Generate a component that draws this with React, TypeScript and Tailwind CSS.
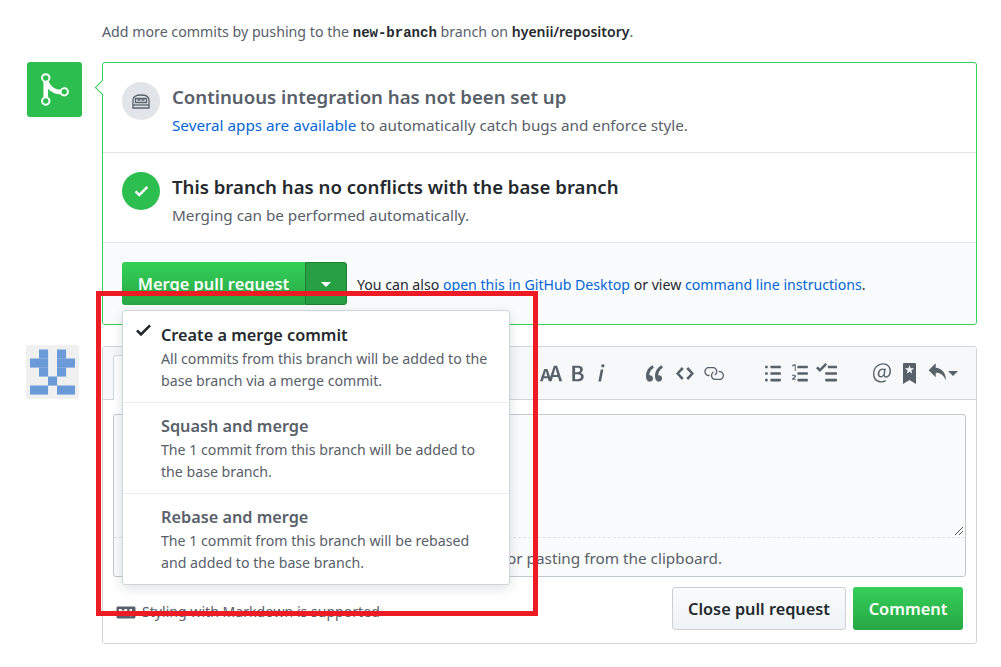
const font = { fontFamily: '"Noto Sans", sans-serif' };

function Octicon({ d, w, h = 16, className }: { d: string; w: number; h?: number; className?: string }) {
  return (
    <svg viewBox={`0 0 ${w} ${h}`} className={className} fill="currentColor">
      <path fillRule="evenodd" d={d} />
    </svg>
  );
}

const merge = "M10 7c-.73 0-1.38.41-1.73 1.02V8C7.22 7.98 6 7.64 5.14 6.98c-.75-.58-1.5-1.61-1.89-2.44A1.993 1.993 0 0 0 2 .99C.89.99 0 1.89 0 3a2 2 0 0 0 1 1.72v6.56c-.59.35-1 .99-1 1.72 0 1.11.89 2 2 2a1.993 1.993 0 0 0 1-3.72V7.67c.67.7 1.44 1.27 2.3 1.69.86.42 2.03.63 2.97.64v-.02c.36.61 1 1.02 1.73 1.02 1.11 0 2-.89 2-2 0-1.11-.89-2-2-2zm-6.8 6c0 .66-.55 1.2-1.2 1.2-.65 0-1.2-.55-1.2-1.2 0-.65.55-1.2 1.2-1.2.65 0 1.2.55 1.2 1.2zM2 4.2C1.34 4.2.8 3.65.8 3c0-.65.55-1.2 1.2-1.2.65 0 1.2.55 1.2 1.2 0 .65-.55 1.2-1.2 1.2zm8 6c-.66 0-1.2-.55-1.2-1.2 0-.65.55-1.2 1.2-1.2.65 0 1.2.55 1.2 1.2 0 .65-.55 1.2-1.2 1.2z";
const check = "M12 5l-8 8-4-4 1.5-1.5L4 10l6.5-6.5L12 5z";
const textSize = "M13.62 9.08L12.1 3.66h-.06l-1.5 5.42h3.08zM5.7 10.13S4.68 6.52 4.53 6.02h-.08l-1.13 4.11H5.7zM17.31 14h-2.25l-.95-3.25h-4.07L9.09 14H6.84l-.69-2.33H2.87L2.17 14H0l3.3-9.59h2.5l2.17 6.34L10.86 2h2.52l3.94 12h-.01z";
const bold = "M1 2h3.83c2.48 0 4.3.75 4.3 2.95 0 1.14-.63 2.23-1.67 2.61v.06c1.33.3 2.3 1.23 2.3 2.86 0 2.39-1.97 3.52-4.61 3.52H1V2zm3.66 4.95c1.67 0 2.38-.66 2.38-1.69 0-1.17-.78-1.61-2.34-1.61H3.13v3.3h1.53zm.27 5.39c1.77 0 2.75-.64 2.75-1.98 0-1.27-.95-1.81-2.75-1.81h-1.8v3.8h1.8v-.01z";
const italic = "M2.81 5h1.98L3 14H1l1.81-9zm.36-2.7c0-.7.58-1.3 1.33-1.3.56 0 1.13.38 1.13 1.03 0 .75-.59 1.3-1.33 1.3-.58 0-1.13-.38-1.13-1.03z";
const quote = "M6.16 3.5C3.73 5.06 2.55 6.67 2.55 9.36c.16-.05.3-.05.44-.05 1.27 0 2.5.86 2.5 2.41 0 1.61-1.03 2.61-2.5 2.61-1.9 0-2.99-1.52-2.99-4.25 0-3.8 1.75-6.53 5.02-8.42L6.16 3.5zm7 0c-2.43 1.56-3.61 3.17-3.61 5.86.16-.05.3-.05.44-.05 1.27 0 2.5.86 2.5 2.41 0 1.61-1.03 2.61-2.5 2.61-1.89 0-2.98-1.52-2.98-4.25 0-3.8 1.75-6.53 5.02-8.42l1.14 1.84h-.01z";
const code = "M9.5 3L8 4.5 11.5 8 8 11.5 9.5 13 14 8 9.5 3zm-5 0L0 8l4.5 5L6 11.5 2.5 8 6 4.5 4.5 3z";
const link = "M4 9h1v1H4c-1.5 0-3-1.69-3-3.5S2.55 3 4 3h4c1.45 0 3 1.69 3 3.5 0 1.41-.91 2.72-2 3.25V8.59c.58-.45 1-1.27 1-2.09C10 5.22 8.98 4 8 4H4c-.98 0-2 1.22-2 2.5S3 9 4 9zm9-3h-1v1h1c1 0 2 1.22 2 2.5S13.98 12 13 12H9c-.98 0-2-1.22-2-2.5 0-.83.42-1.64 1-2.09V6.25c-1.09.53-2 1.84-2 3.25C6 11.31 7.55 13 9 13h4c1.45 0 3-1.69 3-3.5S14.5 6 13 6z";
const listUl = "M2 13c0 .59 0 1-.59 1H.59C0 14 0 13.59 0 13c0-.59 0-1 .59-1h.81c.59 0 .59.41.59 1H2zm2.59-9h6.81c.59 0 .59-.41.59-1 0-.59 0-1-.59-1H4.59C4 2 4 2.41 4 3c0 .59 0 1 .59 1zM1.41 7H.59C0 7 0 7.41 0 8c0 .59 0 1 .59 1h.81c.59 0 .59-.41.59-1 0-.59 0-1-.59-1h.01zm0-5H.59C0 2 0 2.41 0 3c0 .59 0 1 .59 1h.81c.59 0 .59-.41.59-1 0-.59 0-1-.59-1h.01zm10 5H4.59C4 7 4 7.41 4 8c0 .59 0 1 .59 1h6.81c.59 0 .59-.41.59-1 0-.59 0-1-.59-1h.01zm0 5H4.59C4 12 4 12.41 4 13c0 .59 0 1 .59 1h6.81c.59 0 .59-.41.59-1 0-.59 0-1-.59-1h.01z";
const listOl = "M12.01 13c0 .59 0 1-.59 1H4.6c-.59 0-.59-.41-.59-1 0-.59 0-1 .59-1h6.81c.59 0 .59.41.59 1h.01zM4.6 4h6.81C12 4 12 3.59 12 3c0-.59 0-1-.59-1H4.6C4 2 4 2.41 4 3c0 .59 0 1 .59 1H4.6zm6.81 3H4.6C4 7 4 7.41 4 8c0 .59 0 1 .59 1h6.81c.59 0 .59-.41.59-1 0-.59 0-1-.59-1h.01zM2 6h.72V1H1.28L0 1.83v1.09l1.22-.74H2V6zm.27 3.34c-.16-.16-.38-.26-.66-.33-.27-.06-.58-.09-.9-.09-.27 0-.55.04-.83.13L0 9.14v.94c.22-.14.44-.24.66-.31.2-.06.39-.09.56-.09.14 0 .27.03.38.09.09.06.14.16.14.3 0 .13-.06.27-.19.42-.14.17-.42.44-.84.81-.33.28-.55.5-.7.66v.86h2.72v-.84H1.22v-.02l.89-.7c.08-.06.17-.13.27-.22.09-.09.2-.2.28-.33.09-.11.16-.25.22-.39.05-.14.08-.3.08-.47 0-.22-.09-.41-.27-.58l-.42.07z";
const tasklist = "M15.41 9H7.59C7 9 7 8.59 7 8c0-.59 0-1 .59-1h7.81c.59 0 .59.41.59 1 0 .59 0 1-.59 1h.01zM9.59 4C9 4 9 3.59 9 3c0-.59 0-1 .59-1h5.81c.59 0 .59.41.59 1 0 .59 0 1-.59 1H9.59zM0 3.91l1.41-1.3L3 4.2 7.09 0 8.5 1.41 3 6.91l-3-3zM7.59 12h7.81c.59 0 .59.41.59 1 0 .59 0 1-.59 1H7.59C7 14 7 13.59 7 13c0-.59 0-1 .59-1z";
const mention = "M6.58 15c1.25 0 2.52-.31 3.56-.94l-.42-.94c-.84.52-1.89.83-3.03.83-3.23 0-5.64-2.08-5.64-5.72 0-4.37 3.23-7.18 6.58-7.18 3.45 0 5.22 2.19 5.22 5.2 0 2.39-1.34 3.86-2.5 3.86-1.05 0-1.36-.73-1.05-2.19l.73-3.75H8.98l-.11.72c-.41-.63-.94-.83-1.56-.83-2.19 0-3.66 2.39-3.66 4.38 0 1.67.94 2.61 2.3 2.61.84 0 1.67-.53 2.3-1.25.11.94.94 1.45 1.98 1.45 1.67 0 3.77-1.67 3.77-5C14 2.61 11.59 0 7.83 0 3.66 0 0 3.33 0 8.33 0 12.71 2.92 15 6.58 15zm-.31-5c-.73 0-1.36-.52-1.36-1.67 0-1.45.94-3.22 2.41-3.22.52 0 .84.2 1.25.83l-.52 3.02c-.63.73-1.25 1.04-1.78 1.04z";
const bookmark = "M9 0H1C.27 0 0 .27 0 1v15l5-3.09L10 16V1c0-.73-.27-1-1-1zm-.78 4.25L6.36 5.61l.72 2.16c.06.22-.02.28-.2.17L5 6.6 3.12 7.94c-.19.11-.25.05-.2-.17l.72-2.16-1.86-1.36c-.17-.16-.14-.23.09-.23l2.3-.03.7-2.16h.25l.7 2.16 2.3.03c.23 0 .27.08.09.23h.01z";
const reply = "M6 3.5c3.92.44 8 3.125 8 10-2.312-5.062-4.75-6-8-6V11L.5 5.5 6 0v3.5z";
const markdown = "M14.85 3H1.15C.52 3 0 3.52 0 4.15v7.69C0 12.48.52 13 1.15 13h13.69c.64 0 1.15-.52 1.15-1.15v-7.7C16 3.52 15.48 3 14.85 3zM9 11H7V8L5.5 9.92 4 8v3H2V5h2l1.5 2L7 5h2v6zm2.99.5L9.5 8H11V5h2v3h1.5l-2.51 3.5z";

function Identicon() {
  const cells = [
    [1, 0], [3, 0],
    [0, 1], [1, 1], [3, 1], [4, 1],
    [1, 2], [3, 2],
    [2, 3],
    [0, 4], [1, 4], [3, 4], [4, 4],
  ];
  return (
    <div className="-ml-px -mt-px h-[54px] w-[53px] shrink-0 rounded-[3px] bg-[#f0f0f0] p-1">
      <svg viewBox="0 0 5 5" className="h-[46px] w-[45px]" fill="#6a9ad8">
        {cells.map(([x, y]) => <rect key={`${x}-${y}`} x={x} y={y} width="1.01" height="1.01" />)}
      </svg>
    </div>
  );
}

function StatusRow({ icon, title, titleClass, children }: any) {
  return (
    <div className="flex h-[90px] items-start gap-[12px] border-b border-[#e1e4e8] px-[19px] pt-[19px]">
      {icon}
      <div>
        <div className={`text-[18.6px] font-semibold leading-[30px] ${titleClass}`}>{title}</div>
        <div className="mt-[1px] text-[15.25px] leading-[24px] text-[#586069]">{children}</div>
      </div>
    </div>
  );
}

function MenuItem({ title, line1, line2, checked }: { title: string; line1: string; line2: string; checked?: boolean }) {
  return (
    <div className="flex h-[91.5px] items-start border-b border-[#eaecef] pl-[13px] pt-[11px] first:pt-[12px] last:border-b-0">
      <div className="-mt-[3px] w-[25px] shrink-0 text-[#24292e]">
        {checked && <Octicon d={check} w={12} className="h-[20px] w-[15px]" />}
      </div>
      <div>
        <div className={`text-[16.25px] font-semibold leading-[24px] ${checked ? 'text-[#24292e]' : 'text-[#586069]'}`}>{title}</div>
        <div className="mt-[1px] text-[14.17px] leading-[22px] text-[#586069]">{line1}<br />{line2}</div>
      </div>
    </div>
  );
}

export default function App() {
  return (
    <div style={font} className="relative h-[667px] w-[1001px] overflow-hidden bg-white pl-[27px] pt-[20px] text-[#24292e]">
      <div className="h-[24px] pl-[75px] text-[14.2px] leading-[24px] text-[#586069]">
        Add more commits by pushing to the{' '}
        <code className="font-['Liberation_Mono',monospace] text-[14px] font-bold text-[#24292e]">new-branch</code> branch on{' '}
        <span className="text-[14px] font-semibold text-[#24292e]">hyenii/repository</span>.
      </div>

      {/* Merge status */}
      <div className="mt-[18px] flex gap-5">
        <div className="flex h-[55px] w-[55px] shrink-0 items-center justify-center rounded-[3px] bg-[#2cbe4e] text-white">
          <Octicon d={merge} w={12} className="h-[37px] w-[28px]" />
        </div>
        <div className="relative h-[263px] w-[875px] rounded-[3px] border border-[#34d058]">
          <div className="absolute -left-[6px] top-[19px] h-[11px] w-[11px] rotate-45 border-b border-l border-[#34d058] bg-white" />
          <StatusRow
            title="Continuous integration has not been set up"
            titleClass="text-[#586069]"
            icon={
              <div className="relative flex h-[38px] w-[38px] shrink-0 items-center justify-center rounded-full bg-[#e1e4e8]">
                <svg viewBox="0 0 18 15" className="h-[15px] w-[18px]" fill="none" stroke="#586069" strokeWidth="1.3">
                  <path d="M1 14V6c0-3 3-5 8-5s8 2 8 5v8z" />
                  <path d="M3.5 4.5h11v4h-11z" fill="#e1e4e8" />
                  <path d="M5.5 6h3M9.5 6h3" strokeWidth="1.6" />
                  <path d="M1 11h16" />
                </svg>
              </div>
            }
          >
            <span className="text-[#0366d6]">Several apps are available</span> to automatically catch bugs and enforce style.
          </StatusRow>
          <StatusRow
            title="This branch has no conflicts with the base branch"
            titleClass="text-[#24292e]"
            icon={
              <div className="flex h-[38px] w-[38px] shrink-0 items-center justify-center rounded-full bg-[#2cbe4e] text-white">
                <Octicon d={check} w={12} className="h-[18px] w-[15px]" />
              </div>
            }
          >
            Merging can be performed automatically.
          </StatusRow>
          <div className="flex h-[81px] items-start rounded-b-[3px] bg-[#fafbfc] px-[19px] pt-[19px]">
            <div className="flex h-[43px] text-white">
              <div className="flex w-[183px] items-center justify-center rounded-l-[3px] bg-gradient-to-b from-[#34d058] to-[#28a745] pt-[1px] text-[16.4px] font-semibold">
                Merge pull request
              </div>
              <div className="flex w-[42px] items-center justify-center rounded-r-[3px] border border-[#1e7e34] bg-[#279f43]">
                <span className="mt-[2px] h-0 w-0 border-x-[5px] border-t-[5px] border-x-transparent border-t-white" />
              </div>
            </div>
            <div className="ml-[10px] mt-[11px] text-[14.14px] leading-[24px] text-[#24292e]">
              You can also <span className="text-[#0366d6]">open this in GitHub Desktop</span> or view{' '}
              <span className="text-[#0366d6]">command line instructions</span>.
            </div>
          </div>
        </div>
      </div>

      {/* Comment form */}
      <div className="mt-[21px] flex gap-[23px]">
        <Identicon />
        <div className="h-[298px] w-[875px] rounded-[3px] border border-[#d1d5da]">
          <div className="relative flex h-[53px] items-center rounded-t-[3px] border-b border-[#d1d5da] bg-[#f6f8fa] pl-[437px] text-[#586069]">
            <div className="absolute bottom-[-1px] left-[10px] h-[45px] w-[100px] rounded-t-[3px] border border-b-0 border-[#d1d5da] bg-white" />
            <Octicon d={textSize} w={18} className="h-[21px] w-[23px]" />
            <Octicon d={bold} w={10} className="ml-[8px] h-[21px] w-[13px]" />
            <Octicon d={italic} w={6} className="ml-[13px] h-[21px] w-[8px]" />
            <Octicon d={quote} w={14} className="ml-[41px] h-[21px] w-[18px]" />
            <Octicon d={code} w={14} className="ml-[12px] h-[21px] w-[18px]" />
            <Octicon d={link} w={16} className="ml-[9px] h-[21px] w-[21px]" />
            <Octicon d={listUl} w={12} className="ml-[41px] h-[21px] w-[16px]" />
            <Octicon d={listOl} w={12} className="ml-[11px] h-[21px] w-[16px]" />
            <Octicon d={tasklist} w={16} className="ml-[8px] h-[21px] w-[21px]" />
            <Octicon d={mention} w={14} className="ml-[36px] h-[21px] w-[18px]" />
            <Octicon d={bookmark} w={10} className="ml-[12px] h-[21px] w-[13px]" />
            <Octicon d={reply} w={14} className="ml-[12px] h-[21px] w-[18px]" />
            <span className="ml-[2px] h-0 w-0 border-x-[5px] border-t-[5px] border-x-transparent border-t-[#586069]" />
          </div>
          <div className="mx-[10px] mt-[14px] h-[163px] rounded-[3px] border border-[#c3c8cf] bg-[#fafbfc]">
            <div className="relative h-[123px] border-b border-dashed border-[#dfe2e5]">
              <svg viewBox="0 0 10 10" className="absolute bottom-[1px] right-[1px] h-[10px] w-[10px]" stroke="#555" strokeWidth="1">
                <path d="M1 9L9 1M5 9l4-4" />
              </svg>
            </div>
            <div className="pt-[7px] text-right">
              <div className="pr-[243px] text-[15.3px] leading-[26px] text-[#586069]">or pasting from the clipboard.</div>
            </div>
          </div>
          <div className="mt-[10px] flex items-start justify-between pl-[13px] pr-[13px]">
            <div className="flex items-center gap-[6px] pt-[10px] text-[14.1px] leading-[30px] text-[#586069]">
              <Octicon d={markdown} w={16} className="h-[19px] w-[20px]" />
              Styling with Markdown is supported
            </div>
            <div className="flex gap-[7px]">
              <div className="flex h-[43px] w-[174px] items-center justify-center rounded-[3px] border border-[#ccd0d5] bg-gradient-to-b from-[#fafbfc] to-[#eff3f6] pt-[1px] text-[16.3px] font-semibold text-[#24292e]">
                Close pull request
              </div>
              <div className="flex h-[43px] w-[110px] items-center justify-center rounded-[3px] bg-gradient-to-b from-[#34d058] to-[#28a745] pt-[1px] text-[16.4px] font-semibold text-white">
                Comment
              </div>
            </div>
          </div>
        </div>
      </div>

      {/* Merge method dropdown */}
      <div className="absolute left-[122px] top-[310px] h-[275px] w-[388px] rounded-[3px] border border-[#d1d5da] bg-white shadow-[0_3px_12px_rgba(27,31,35,0.15)]">
        <MenuItem checked title="Create a merge commit" line1="All commits from this branch will be added to the" line2="base branch via a merge commit." />
        <MenuItem title="Squash and merge" line1="The 1 commit from this branch will be added to" line2="the base branch." />
        <MenuItem title="Rebase and merge" line1="The 1 commit from this branch will be rebased" line2="and added to the base branch." />
      </div>

      {/* Red annotation box */}
      <div className="pointer-events-none absolute left-[96px] top-[291px] h-[325px] w-[442px] border-[5px] border-[#ed1c24]" />
    </div>
  );
}
